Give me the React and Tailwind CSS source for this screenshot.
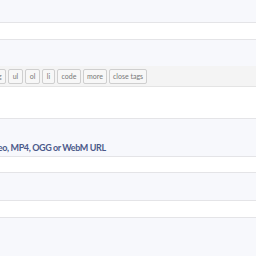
const BUTTONS = [
  { label: 'img', w: 'w-[20px]' },
  { label: 'ul', w: 'w-[15px]' },
  { label: 'ol', w: 'w-[15px]' },
  { label: 'li', w: 'w-[13px]' },
  { label: 'code', w: 'w-[24px]' },
  { label: 'more', w: 'w-[24px]' },
  { label: 'close tags', w: 'w-[38px]' },
];

export default function App() {
  return (
    <div className="w-[256px] h-[256px] overflow-hidden bg-[#f7f8fc]" style={{ fontFamily: 'Lato, "Open Sans", sans-serif' }}>
      <div className="h-[22px]" />
      <div className="h-[18px] bg-white border-y border-[#e4e4e7]" />
      <div className="h-[26px]" />
      <div className="h-[21px] bg-[#f4f4f4] border-b border-[#e4e4e4] flex items-center">
        <div className="flex gap-[2px] -ml-[14px]">
          {BUTTONS.map((b) => (
            <span
              key={b.label}
              className={`${b.w} h-[15px] shrink-0 flex items-center justify-center whitespace-nowrap border border-[#cfcfcf] rounded-[2px] bg-[#f7f7f7] text-[7px] text-[#777] leading-none`}
            >
              {b.label}
            </span>
          ))}
        </div>
      </div>
      <div className="h-[32px] bg-white border-b border-[#e4e4e7]" />
      <div className="h-[37px] flex items-end pb-[2px] overflow-hidden">
        <span className="whitespace-nowrap -ml-[17px] text-[9px] tracking-[-0.4px] font-bold text-[#4b5a8a]">
          Vimeo, MP4, OGG or WebM URL
        </span>
      </div>
      <div className="h-[17px] bg-white border-y border-[#e4e4e7]" />
      <div className="h-[27px]" />
      <div className="h-[18px] bg-white border-y border-[#e4e4e7]" />
    </div>
  );
}
